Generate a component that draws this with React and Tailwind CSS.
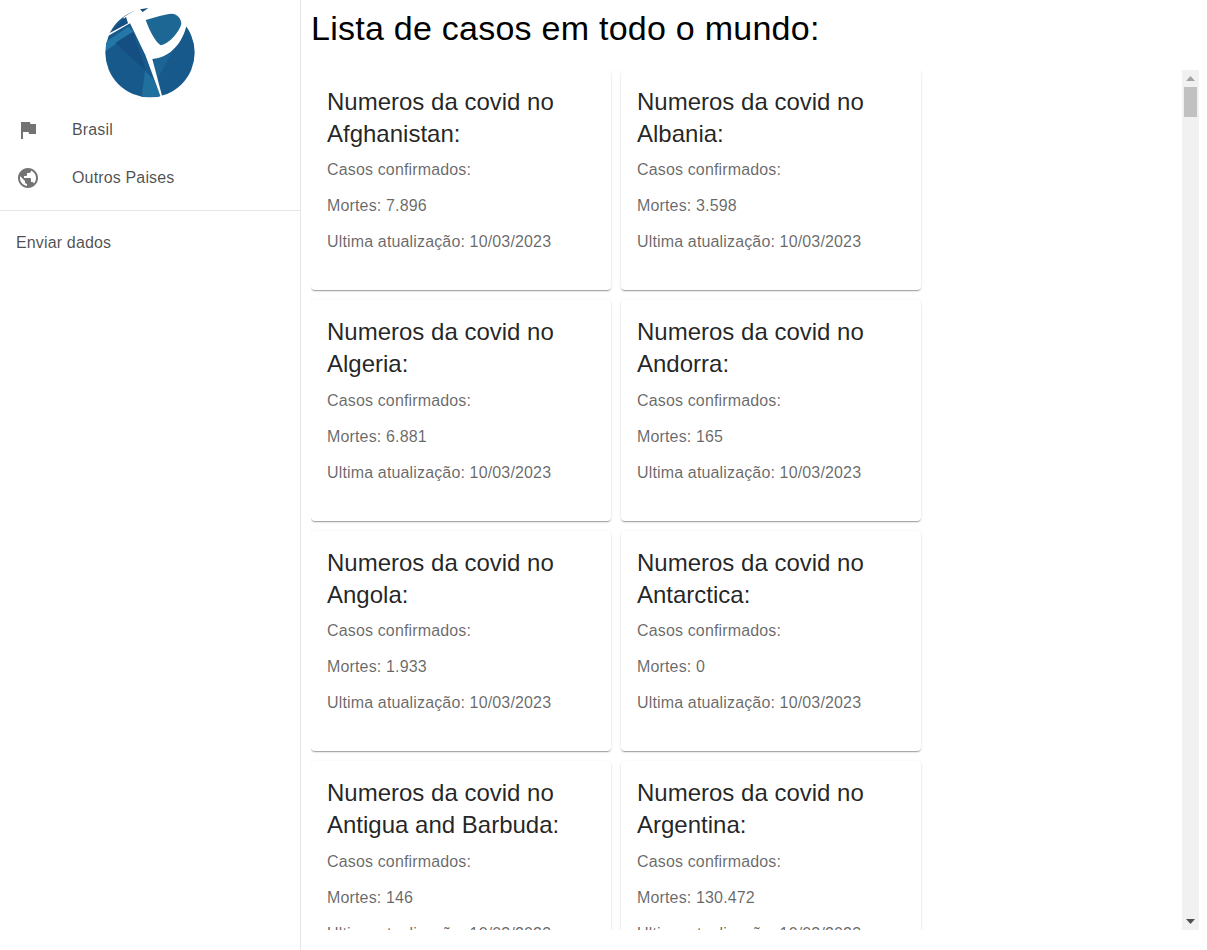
const countries = [
  { name: 'Afghanistan', deaths: '7.896' },
  { name: 'Albania', deaths: '3.598' },
  { name: 'Algeria', deaths: '6.881' },
  { name: 'Andorra', deaths: '165' },
  { name: 'Angola', deaths: '1.933' },
  { name: 'Antarctica', deaths: '0' },
  { name: 'Antigua and Barbuda', deaths: '146' },
  { name: 'Argentina', deaths: '130.472' },
];

function Logo() {
  return (
    <svg viewBox="0 0 360 318" className="block w-[120px] h-[106px] mx-auto">
      <defs>
        <clipPath id="disc">
          <circle cx="180" cy="158" r="134" />
        </clipPath>
      </defs>
      <g clipPath="url(#disc)">
        <rect x="40" y="20" width="280" height="280" fill="#17598a" />
        <polygon points="44,128 115,80 130,95 48,152" fill="#2478a8" />
        <polygon points="76,128 128,96 168,212" fill="#154e80" />
        <polygon points="155,292 165,212 190,238 212,290" fill="#1f6f9f" />
        <polygon points="190,180 245,160 200,242" fill="#1b6494" />
      </g>
      <path
        d="M40,108 L108,70 L100,52 L150,22 L290,20 L290,75 C278,125 245,172 187,177 L216,287 L212,290 L166,165 L120,70 L50,110 Z"
        fill="#fff"
      />
      <path d="M167,60 C195,52 225,42 246,41 C262,42 274,55 274,72 C268,95 240,130 212,136 C195,125 178,90 167,60 Z" fill="#1d6794" />
      <polygon points="58,100 108,50 114,70" fill="#154e80" />
      <polygon points="150,28 175,24 158,36" fill="#154e80" />
    </svg>
  );
}

function NavItem({ label, icon }) {
  return (
    <div className="flex items-center h-12 px-4">
      <div className="w-14 shrink-0">{icon}</div>
      <span className="text-base tracking-[0.15px] text-black/70">{label}</span>
    </div>
  );
}

function CaseCard({ name, deaths }) {
  return (
    <div className="w-[300px] bg-white rounded pt-4 px-4 pb-6 shadow-[0_2px_1px_-1px_rgba(0,0,0,0.2),0_1px_1px_0_rgba(0,0,0,0.14),0_1px_3px_0_rgba(0,0,0,0.12)]">
      <h5 className="text-2xl leading-[1.334] text-black/87 mb-[8.4px]">Numeros da covid no {name}:</h5>
      <p className="text-base leading-6 tracking-[0.15px] text-black/60 mb-3">Casos confirmados:</p>
      <p className="text-base leading-6 tracking-[0.15px] text-black/60 mb-3">Mortes: {deaths}</p>
      <p className="text-base leading-6 tracking-[0.15px] text-black/60 mb-3">Ultima atualização: 10/03/2023</p>
    </div>
  );
}

function FakeScrollbar() {
  return (
    <div className="absolute top-0 right-0 bottom-0 w-[17px] bg-[#f1f1f1] flex flex-col items-center">
      <svg viewBox="0 0 9 5" className="w-[9px] h-[5px] mt-[6px] fill-[#a3a3a3]">
        <polygon points="4.5,0 9,5 0,5" />
      </svg>
      <div className="w-[13px] h-[30px] mt-[6px] bg-[#c1c1c1]" />
      <svg viewBox="0 0 9 5" className="w-[9px] h-[5px] mt-auto mb-[6px] fill-[#505050]">
        <polygon points="0,0 9,0 4.5,5" />
      </svg>
    </div>
  );
}

export default function App() {
  return (
    <div className="flex h-screen overflow-hidden bg-white font-['Liberation_Sans',Arial,sans-serif]">
      <aside className="w-[301px] shrink-0 border-r border-black/10">
        <Logo />
        <NavItem
          label="Brasil"
          icon={
            <svg viewBox="0 0 24 24" className="w-6 h-6 fill-black/55">
              <path d="M14.4 6 14 4H5v17h2v-7h5.6l.4 2h7V6z" />
            </svg>
          }
        />
        <NavItem
          label="Outros Paises"
          icon={
            <svg viewBox="0 0 24 24" className="w-6 h-6 fill-black/55">
              <path d="M12 2C6.48 2 2 6.48 2 12s4.48 10 10 10 10-4.48 10-10S17.52 2 12 2zm-1 17.93c-3.95-.49-7-3.85-7-7.93 0-.62.08-1.21.21-1.79L9 15v1c0 1.1.9 2 2 2v1.93zm6.9-2.54c-.26-.81-1-1.39-1.9-1.39h-1v-3c0-.55-.45-1-1-1H8v-2h2c.55 0 1-.45 1-1V7h2c1.1 0 2-.9 2-2v-.41c2.93 1.19 5 4.06 5 7.41 0 2.08-.8 3.97-2.1 5.39z" />
            </svg>
          }
        />
        <div className="mt-2 border-t border-black/10 pt-2">
          <div className="flex items-center h-12 px-4 text-base tracking-[0.15px] text-black/70">Enviar dados</div>
        </div>
      </aside>

      <main className="flex-1 min-w-0 pl-2.5 pr-2">
        <h1 className="h-[70px] pt-[7px] text-[34px] leading-[42px] tracking-[0.25px] text-black">Lista de casos em todo o mundo:</h1>
        <div className="relative h-[860px]">
          <div className="h-full overflow-y-auto">
            <div className="flex flex-wrap content-start gap-2.5 pr-[17px]">
              {countries.map((c) => (
                <CaseCard key={c.name} name={c.name} deaths={c.deaths} />
              ))}
            </div>
          </div>
          <FakeScrollbar />
        </div>
      </main>
    </div>
  );
}
